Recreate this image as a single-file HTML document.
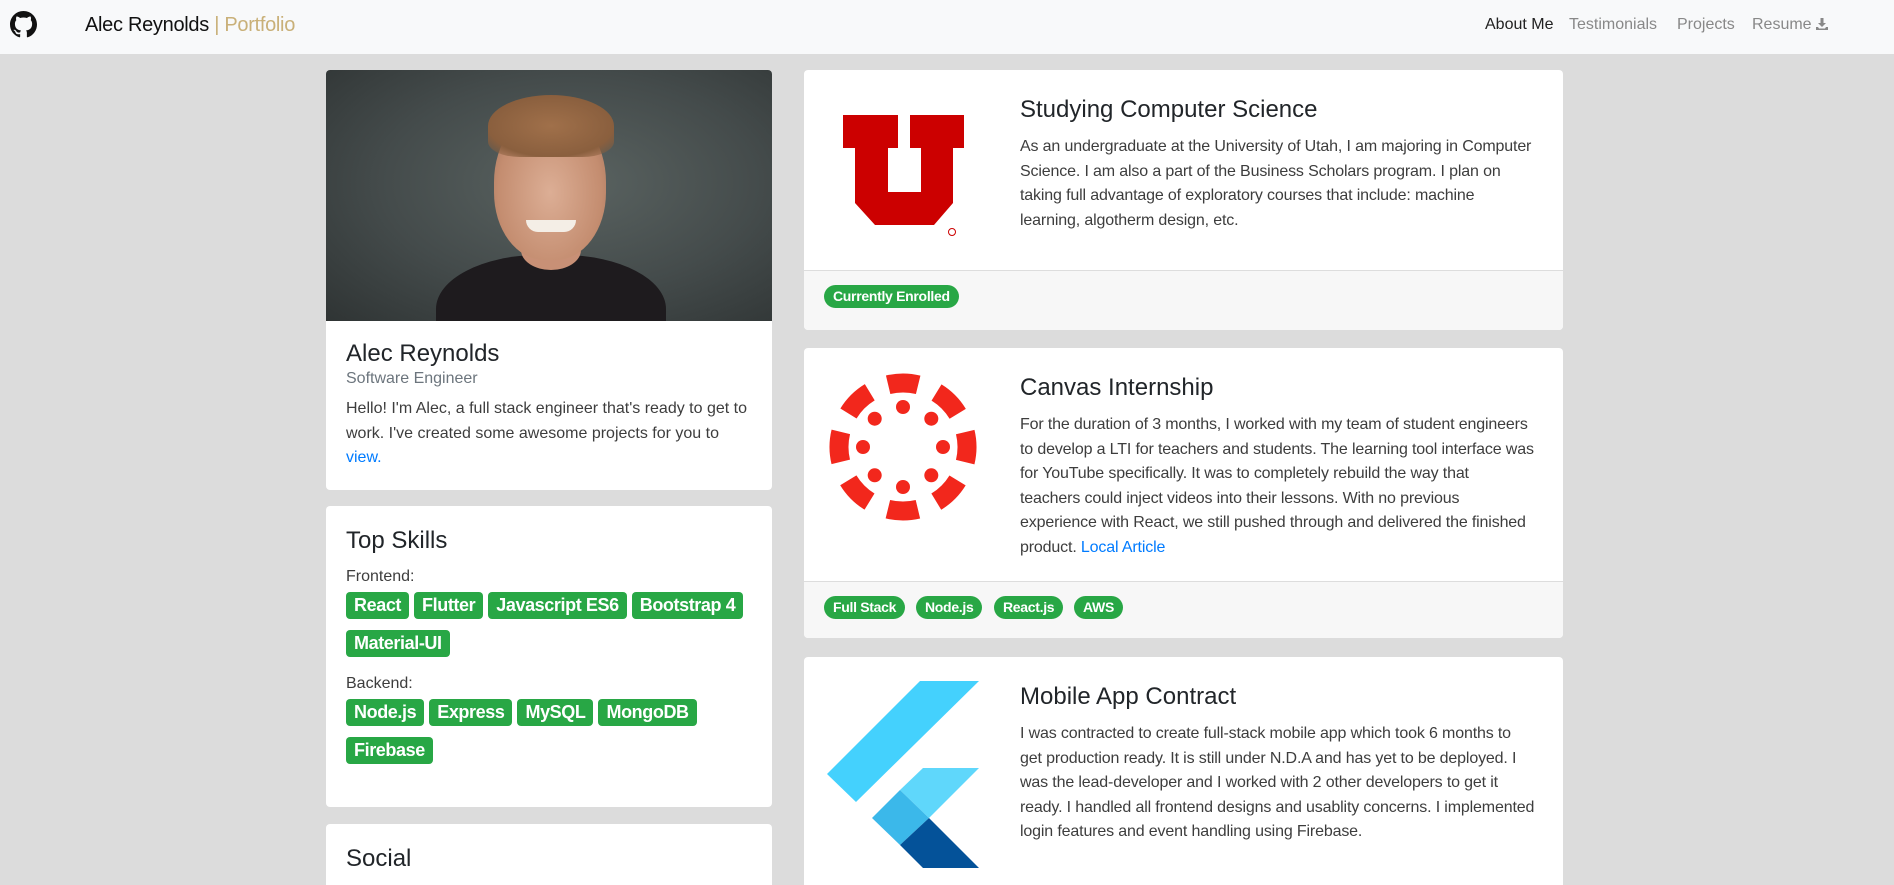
<!DOCTYPE html>
<html style="width:1894px;height:885px;overflow:hidden"><head><meta charset="utf-8">
<style>
*{box-sizing:border-box;margin:0;padding:0}
body{width:1894px;height:885px;overflow:hidden;background:#dcdcdc;font-family:"Liberation Sans",sans-serif;color:#212529;position:relative}
.nav{position:absolute;left:0;top:0;width:1894px;height:54px;background:#f8f9fa}
.brand{position:absolute;left:85px;top:14px;font-size:20px;color:#111;letter-spacing:-0.3px}
.brand span{color:#c9b078}
.links{position:absolute;top:16px;font-size:16px;color:#888}
.card{position:absolute;background:#fff;border-radius:4px;overflow:hidden}
.foot{position:absolute;left:0;right:0;bottom:0;background:#f7f7f7;border-top:1.5px solid #ddd}
.pill{position:absolute;height:23px;line-height:23px;border-radius:12px;background:#28a745;color:#fff;font-weight:bold;font-size:14px;padding:0 9px;letter-spacing:-0.3px}
.sk{display:inline-block;height:27px;line-height:27px;border-radius:4px;background:#28a745;color:#fff;font-weight:bold;font-size:18px;padding:0 8px;margin:0 5px 11px 0;letter-spacing:-0.4px}
.t{position:absolute;left:216px;font-size:16px;line-height:24.6px;color:#3d3d3d;white-space:nowrap;letter-spacing:-0.15px}
.h{position:absolute;left:216px;font-size:24px;color:#212529}
a{color:#007bff;text-decoration:none}
</style></head><body>
<div class="nav">
<svg style="position:absolute;left:10px;top:11px" width="27" height="27" viewBox="0 0 16 16"><path fill="#111" d="M8 0C3.58 0 0 3.58 0 8c0 3.54 2.290 6.53 5.47 7.590.4.07.55-.17.55-.38 0-.19-.01-.82-.01-1.49-2.010.37-2.530-.49-2.690-.94-.09-.23-.48-.94-.82-1.130-.28-.15-.68-.52-.01-.53.63-.01 1.080.58 1.230.82.72 1.210 1.870.87 2.330.66.07-.52.28-.87.51-1.07-1.780-.2-3.640-.89-3.640-3.950 0-.87.31-1.590.82-2.150-.08-.2-.36-1.020.08-2.120 0 0 .67-.21 2.200.82.64-.18 1.320-.27 2-.27.68 0 1.360.09 2 .27 1.530-1.040 2.200-.82 2.200-.82.44 1.100.16 1.920.08 2.120.51.56.82 1.270.82 2.150 0 3.070-1.870 3.750-3.650 3.950.29.25.54.73.54 1.480 0 1.070-.01 1.930-.01 2.200 0 .21.15.46.55.38A8.013 8.013 0 0016 8c0-4.420-3.580-8-8-8z"/></svg>
<div class="brand">Alec Reynolds <span>| Portfolio</span></div>
<div class="links" style="left:1485px;color:#222">About Me</div>
<div class="links" style="left:1569px">Testimonials</div>
<div class="links" style="left:1677px">Projects</div>
<div class="links" style="left:1752px">Resume <svg width="12" height="12" viewBox="0 0 12 12" style="vertical-align:-1px"><path fill="#888" d="M4.5 0h3v5h2.5L6 9 2 5h2.5z M0 9h2l1 1.5h6L10 9h2v3H0z"/></svg></div>
</div>

<div class="card" style="left:326px;top:70px;width:446px;height:420px">
<div style="position:absolute;left:0;top:0;width:446px;height:251px;overflow:hidden;background:radial-gradient(ellipse at 55% 45%,#5a6361 0%,#444b4b 55%,#2f3434 100%)">
<div style="position:absolute;left:110px;top:185px;width:230px;height:120px;border-radius:45% 45% 0 0;background:#1e1b1e"></div>
<div style="position:absolute;left:195px;top:160px;width:60px;height:40px;border-radius:0 0 50% 50%;background:#c89076"></div>
<div style="position:absolute;left:168px;top:40px;width:112px;height:150px;border-radius:48% 48% 45% 45%;background:radial-gradient(ellipse at 50% 55%,#dcae95 0%,#c48d70 65%,#9c6d55 100%)"></div>
<div style="position:absolute;left:162px;top:25px;width:126px;height:62px;border-radius:50% 50% 25% 25%;background:radial-gradient(ellipse at 50% 50%,#a0704a 0%,#8a5f3e 70%,rgba(110,80,60,0) 100%)"></div>
<div style="position:absolute;left:200px;top:150px;width:50px;height:12px;border-radius:0 0 25px 25px;background:#f4eee6"></div>
</div>
<div style="position:absolute;left:20px;top:270px;font-size:24px">Alec Reynolds</div>
<div style="position:absolute;left:20px;top:300px;font-size:16px;color:#6c757d">Software Engineer</div>
<div style="position:absolute;left:20px;top:327px;font-size:16px;line-height:24.5px;color:#3d3d3d;width:410px">Hello! I'm Alec, a full stack engineer that's ready to get to work. I've created some awesome projects for you to <a>view.</a></div>
</div>

<div class="card" style="left:326px;top:506px;width:446px;height:301px">
<div style="position:absolute;left:20px;top:21px;font-size:24px">Top Skills</div>
<div style="position:absolute;left:20px;top:62px;font-size:16px;color:#3d3d3d">Frontend:</div>
<div style="position:absolute;left:20px;top:86px;width:420px"><span class="sk">React</span><span class="sk">Flutter</span><span class="sk">Javascript ES6</span><span class="sk">Bootstrap 4</span><span class="sk">Material-UI</span></div>
<div style="position:absolute;left:20px;top:169px;font-size:16px;color:#3d3d3d">Backend:</div>
<div style="position:absolute;left:20px;top:193px;width:420px"><span class="sk">Node.js</span><span class="sk">Express</span><span class="sk">MySQL</span><span class="sk">MongoDB</span><span class="sk">Firebase</span></div>
</div>

<div class="card" style="left:326px;top:824px;width:446px;height:61px;border-radius:4px 4px 0 0">
<div style="position:absolute;left:20px;top:21px;font-size:24px">Social</div>
</div>

<div class="card" style="left:804px;top:70px;width:759px;height:260px">
<svg style="position:absolute;left:0;top:0" width="759" height="260" viewBox="804 70 759 260"><path fill="#cc0000" d="M843 115H898V148H888V192H921V148H910V115H964V148H953V203L934 225H875L855 203V148H843Z"/><circle cx="952" cy="232" r="3.5" fill="none" stroke="#cc0000" stroke-width="1"/></svg>
<div class="h" style="top:26px">Studying Computer Science</div>
<div class="t" style="top:65px">As an undergraduate at the University of Utah, I am majoring in Computer<br>Science. I am also a part of the Business Scholars program. I plan on<br>taking full advantage of exploratory courses that include: machine<br>learning, algotherm design, etc.</div>
<div class="foot" style="height:60px"><div class="pill" style="left:20px;top:14px">Currently Enrolled</div></div>
</div>

<div class="card" style="left:804px;top:348px;width:759px;height:290px">
<svg style="position:absolute;left:25px;top:25px" width="148" height="148" viewBox="-74 -74 148 148">
<g fill="#f2271c">
<circle r="64" fill="none" stroke="#f2271c" stroke-width="19" stroke-dasharray="30.3 19.96" transform="rotate(-13.5)"/>
<circle cx="0" cy="-40" r="7"/><circle cx="0" cy="40" r="7"/><circle cx="-40" cy="0" r="7"/><circle cx="40" cy="0" r="7"/>
<circle cx="-28.3" cy="-28.3" r="7"/><circle cx="28.3" cy="-28.3" r="7"/><circle cx="-28.3" cy="28.3" r="7"/><circle cx="28.3" cy="28.3" r="7"/>
</g></svg>
<div class="h" style="top:26px">Canvas Internship</div>
<div class="t" style="top:65px">For the duration of 3 months, I worked with my team of student engineers<br>to develop a LTI for teachers and students. The learning tool interface was<br>for YouTube specifically. It was to completely rebuild the way that<br>teachers could inject videos into their lessons. With no previous<br>experience with React, we still pushed through and delivered the finished<br>product. <a>Local Article</a></div>
<div class="foot" style="height:57px">
<div class="pill" style="left:20px;top:14px">Full Stack</div>
<div class="pill" style="left:112px;top:14px">Node.js</div>
<div class="pill" style="left:190px;top:14px">React.js</div>
<div class="pill" style="left:270px;top:14px">AWS</div>
</div>
</div>

<div class="card" style="left:804px;top:657px;width:759px;height:228px;border-radius:4px 4px 0 0">
<svg style="position:absolute;left:23px;top:24px" width="152" height="188" viewBox="0 0 152 188">
<polygon fill="#44d1fd" points="93,0 152,0 29,121 0,93"/>
<polygon fill="#5fd7fb" points="96,87 152,87 102,137 73,109"/>
<polygon fill="#3bb8ea" points="73,109 102,137 73,164 45,137"/>
<polygon fill="#045299" points="102,137 152,187 96,187 73,164"/>
</svg>
<div class="h" style="top:26px">Mobile App Contract</div>
<div class="t" style="top:65px">I was contracted to create full-stack mobile app which took 6 months to<br>get production ready. It is still under N.D.A and has yet to be deployed. I<br>was the lead-developer and I worked with 2 other developers to get it<br>ready. I handled all frontend designs and usablity concerns. I implemented<br>login features and event handling using Firebase.</div>
</div>
</body></html>
